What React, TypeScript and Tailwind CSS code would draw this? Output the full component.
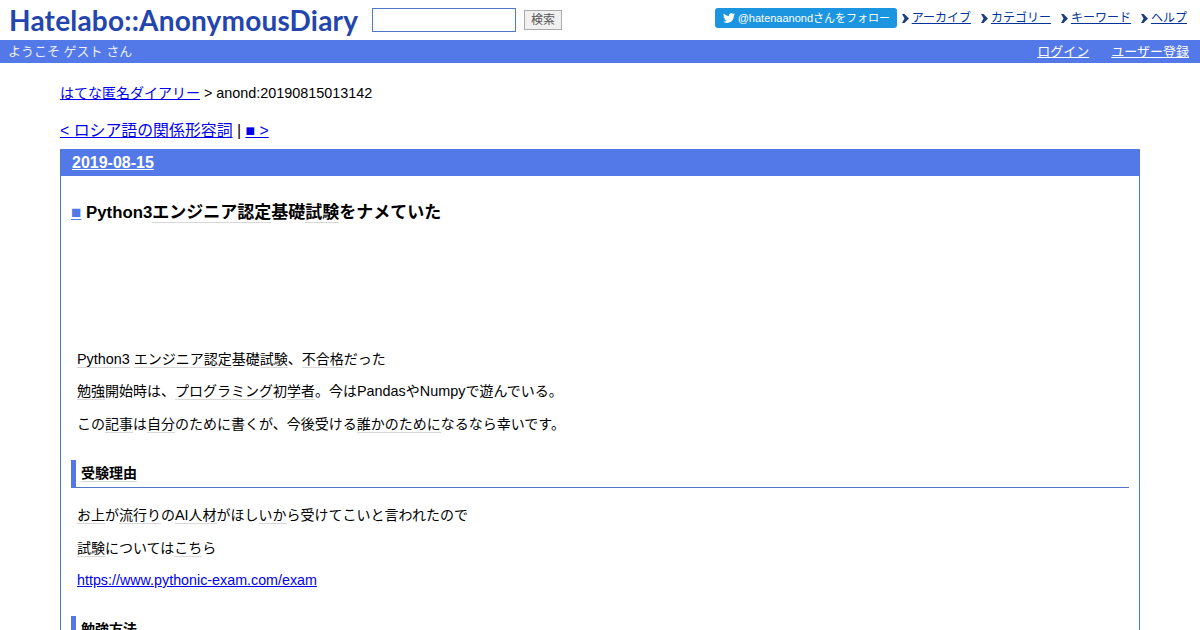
import React from "react";

const FONT = "font-['Liberation_Sans','Noto_Sans_CJK_JP',sans-serif]";

function Kw({ children }: { children: React.ReactNode }) {
  return <span className="border-b border-[#d8d8d8]">{children}</span>;
}

// latin runs are a touch larger than the japanese around them in the original
function En({ children }: { children: React.ReactNode }) {
  return <span className="text-[14.4px]">{children}</span>;
}

function NavLink({ label }: { label: string }) {
  return (
    <span className="flex items-center">
      <svg width="7" height="9" viewBox="0 0 7 9" className="mr-[3px]">
        <polygon points="0,0 2.500,0 7,4.500 2.500,9 0,9 2.500,4.500" fill="#1c3f7c" />
      </svg>
      <a href="#" className="text-[#003399] underline">{label}</a>
    </span>
  );
}

function Section({ title }: { title: string }) {
  return (
    <h4 className="border-l-[5px] border-b border-l-[#5279e7] border-b-[#5279c7] pl-[5px] h-[28px] leading-[26px] text-[14px] font-bold text-black">
      <Kw>{title}</Kw>
    </h4>
  );
}

export default function App() {
  return (
    <div className={`${FONT} h-[630px] overflow-hidden bg-white text-black`}>
      <header className="flex h-[40px] items-center justify-between">
        <div className="flex items-center">
          <div className="ml-[9px] w-[350px] font-['Lato',sans-serif] text-[28px] font-bold leading-none tracking-[0.2px] text-[#2345ae] whitespace-nowrap">
            Hatelabo::AnonymousDiary
          </div>
          <input className="ml-[13px] h-[24px] w-[144px] border border-[#5279c7] bg-white" />
          <button className="ml-[8px] h-[20px] w-[38px] border border-[#aaa] bg-[#f0f0f0] text-[12px] leading-none text-[#555]">
            検索
          </button>
        </div>
        <div className="mb-[4px] mr-[13px] flex items-center text-[12px]">
          <a href="#" className="flex h-[20px] w-[182px] items-center rounded-[3px] bg-[#1b95e0] pl-[7px] text-[11px] text-white">
            <svg width="14" height="12" viewBox="0 0 24 24" className="mr-[2px]" fill="white">
              <path d="M23.950 4.570a10 10 0 0 1-2.820.770 4.960 4.960 0 0 0 2.160-2.720c-.950.550-2 .950-3.130 1.190a4.920 4.920 0 0 0-8.380 4.480C7.690 8.090 4.070 6.130 1.640 3.160a4.820 4.820 0 0 0-.660 2.470c0 1.710.870 3.210 2.190 4.100a4.900 4.900 0 0 1-2.230-.620v.060a4.920 4.920 0 0 0 3.950 4.830 5 5 0 0 1-2.210.080 4.940 4.940 0 0 0 4.600 3.420A9.870 9.870 0 0 1 0 19.540a14 14 0 0 0 7.560 2.210c9.050 0 14-7.500 14-13.980 0-.210 0-.420-.020-.630a9.940 9.940 0 0 0 2.460-2.550z" />
            </svg>
            @hatenaanondさんをフォロー
          </a>
          <div className="ml-[5px] flex gap-[10px]">
            <NavLink label="アーカイブ" />
            <NavLink label="カテゴリー" />
            <NavLink label="キーワード" />
            <NavLink label="ヘルプ" />
          </div>
        </div>
      </header>

      <div className="flex h-[23px] items-center justify-between bg-[#5279e7] pl-[8px] pr-[11px] text-[13px] text-[#eef]">
        <span>ようこそ ゲスト さん</span>
        <div className="flex gap-[22px] text-white">
          <a href="#" className="underline">ログイン</a>
          <a href="#" className="underline">ユーザー登録</a>
        </div>
      </div>

      <main className="px-[60px]">
        <p className="mt-[21px] text-[14px] leading-[18px]">
          <a href="#" className="text-[#0000ee] underline">はてな匿名ダイアリー</a> <En>&gt; anond:20190815013142</En>
        </p>
        <p className="mt-[20px] text-[15.840px] leading-[18px]">
          <a href="#" className="text-[#0000ee] underline">&lt; <span className="text-[15.900px]">ロシア語の関係形容詞</span></a> |{" "}
          <a href="#" className="text-[#0000ee] underline">■ &gt;</a>
        </p>

        <section className="mt-[9px] border border-[#5279c7] border-t-0">
          <h2 className="h-[27px] bg-[#5279e7] pl-[11px] text-[16px] font-bold leading-[27px] text-white">
            <a href="#" className="underline">2019-08-15</a>
          </h2>
          <div className="px-[10px]">
            <h3 className="mt-[26px] text-[17px] font-bold leading-[22px]">
              <a href="#" className="text-[#5279e7] underline">■</a>{" "}
              <span className="text-[16.800px]">Python3</span>
              <Kw>エンジニア認定</Kw>基礎<Kw>試験</Kw>をナメていた
            </h3>

            <div className="ml-[6px] mt-[126px] text-[14px] leading-[18px]">
              <p><Kw><En>Python3</En></Kw> <Kw>エンジニア認定</Kw>基礎<Kw>試験</Kw>、<Kw>不合格</Kw>だった</p>
              <p className="mt-[14px]"><Kw>勉強</Kw>開始時は、<Kw>プログラミング</Kw>初<Kw>学者</Kw>。今は<En>Pandas</En>や<En>Numpy</En>で遊んでいる。</p>
              <p className="mt-[15px]">この<Kw>記事</Kw>は<Kw>自分</Kw>のために書くが、今後受ける<Kw>誰かのために</Kw>なるなら幸いです。</p>
            </div>

            <div className="mt-[27px]">
              <Section title="受験理由" />
            </div>

            <div className="ml-[6px] mt-[18px] text-[14px] leading-[18px]">
              <p><Kw>お上</Kw>が<Kw>流行り</Kw>の<Kw><En>AI</En>人材</Kw>がほし<Kw>いか</Kw>ら受けてこいと言われたので</p>
              <p className="mt-[15px]"><Kw>試験</Kw>については<Kw>こち</Kw>ら</p>
              <p className="mt-[14px]">
                <a href="#" className="text-[14.300px] text-[#0000ee] underline">https://www.pythonic-exam.com/exam</a>
              </p>
            </div>

            <div className="mt-[27px]">
              <Section title="勉強方法" />
            </div>
          </div>
        </section>
      </main>
    </div>
  );
}
